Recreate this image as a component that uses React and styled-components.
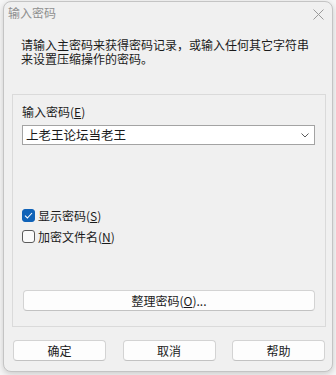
import styled, { createGlobalStyle } from "styled-components";

const GlobalStyle = createGlobalStyle`
  html, body {
    margin: 0;
    padding: 0;
    background: #f6f6f6;
  }
  body {
    font-family: "Noto Sans CJK SC", "Noto Sans", sans-serif;
    font-size: 12px;
    color: #1b1b1b;
  }
`;

const Page = styled.div`
  width: 336px;
  height: 375px;
  padding: 1px 3px 0 3px;
  box-sizing: border-box;
  overflow: hidden;
`;

const Dialog = styled.div`
  width: 330px;
  height: 371px;
  box-sizing: border-box;
  background: #f0f0f0;
  border: 1px solid #c4c4c4;
  border-radius: 8px;
  box-shadow: 0 2px 6px rgba(0, 0, 0, 0.18);
  display: flex;
  flex-direction: column;
`;

const TitleBar = styled.div`
  height: 22px;
  display: flex;
  align-items: center;
  justify-content: space-between;
  padding: 0 8px 0 4px;
`;

const Title = styled.span`
  color: #8f8f8f;
  font-size: 12px;
  line-height: 14px;
`;

const Close = styled.svg`
  width: 11px;
  height: 11px;
  margin-top: 3px;
`;

const Intro = styled.p`
  margin: 14px 0 0 0;
  padding: 0 17px;
  line-height: 14px;
  font-size: 12px;
`;

const Group = styled.div`
  margin: 28px 6px 0 8px;
  border: 1px solid #dadada;
  padding: 10px 10px 15px 9px;
  display: flex;
  flex-direction: column;
`;

const Label = styled.div`
  line-height: 14px;
`;

const Combo = styled.div`
  margin-top: 6px;
  height: 20px;
  box-sizing: border-box;
  background: #ffffff;
  border: 1px solid #a3a3a3;
  display: flex;
  align-items: center;
  justify-content: space-between;
  padding: 0 5px 0 3px;
  font-size: 12.5px;
  line-height: 18px;
`;

const Chevron = styled.svg`
  width: 8px;
  height: 5px;
`;

const Checks = styled.div`
  margin-top: 64px;
  display: flex;
  flex-direction: column;
  gap: 8px;
`;

const CheckRow = styled.label`
  display: flex;
  align-items: center;
  gap: 3px;
  height: 13px;
  line-height: 13px;
`;

const Box = styled.span`
  width: 13px;
  height: 13px;
  box-sizing: border-box;
  border-radius: 3px;
  display: flex;
  align-items: center;
  justify-content: center;
  background: ${(p) => (p.$checked ? "#0f62b8" : "#fbfbfb")};
  border: 1px solid ${(p) => (p.$checked ? "#0f62b8" : "#5b5b5b")};
`;

const Button = styled.button`
  height: 21px;
  box-sizing: border-box;
  background: #fdfdfd;
  border: 1px solid #d3d3d3;
  border-bottom-color: #c2c2c2;
  border-radius: 4px;
  font-family: inherit;
  font-size: 12px;
  color: #1b1b1b;
  line-height: 18px;
  padding: 0;
`;

const WideButton = styled(Button)`
  margin: 47px 0 0 1px;
`;

const Footer = styled.div`
  margin-top: 13px;
  padding: 0 7px 0 9px;
  display: flex;
  justify-content: space-between;
`;

const FooterButton = styled(Button)`
  width: 93px;
`;

function Check({ checked, children }) {
  return (
    <CheckRow>
      <Box $checked={checked}>
        {checked && (
          <svg width="9" height="7" viewBox="0 0 9 7">
            <path d="M1 3.6 L3.4 6 L8 1" fill="none" stroke="#fff" strokeWidth="1.1" />
          </svg>
        )}
      </Box>
      {children}
    </CheckRow>
  );
}

export default function App() {
  return (
    <>
      <GlobalStyle />
      <Page>
        <Dialog>
          <TitleBar>
            <Title>输入密码</Title>
            <Close viewBox="0 0 11 11">
              <path d="M0.5 0.5 L10.5 10.5 M10.5 0.5 L0.5 10.5" stroke="#9a9a9a" strokeWidth="1" />
            </Close>
          </TitleBar>
          <Intro>
            请输入主密码来获得密码记录，或输入任何其它字符串
            <br />
            来设置压缩操作的密码。
          </Intro>
          <Group>
            <Label>
              输入密码(<u>E</u>)
            </Label>
            <Combo>
              <span>上老王论坛当老王</span>
              <Chevron viewBox="0 0 8 5">
                <path d="M0.5 0.5 L4 4 L7.5 0.5" fill="none" stroke="#5a5a5a" strokeWidth="1" />
              </Chevron>
            </Combo>
            <Checks>
              <Check checked>
                <span>
                  显示密码(<u>S</u>)
                </span>
              </Check>
              <Check>
                <span>
                  加密文件名(<u>N</u>)
                </span>
              </Check>
            </Checks>
            <WideButton>
              整理密码(<u>O</u>)...
            </WideButton>
          </Group>
          <Footer>
            <FooterButton>确定</FooterButton>
            <FooterButton>取消</FooterButton>
            <FooterButton>帮助</FooterButton>
          </Footer>
        </Dialog>
      </Page>
    </>
  );
}
